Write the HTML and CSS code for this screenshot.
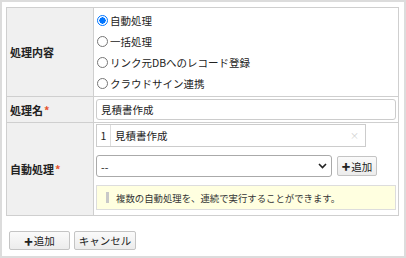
FILE: index.html
```html
<!DOCTYPE html>
<html lang="ja">
<head>
    <meta charset="UTF-8">
    <title>処理設定</title>
    <link rel="stylesheet" href="styles.css">
</head>
<body>
    <div class="frame">
        <table class="form-table">
            <tr class="row-type">
                <th>処理内容</th>
                <td>
                    <label class="radio"><input type="radio" name="type" checked> 自動処理</label>
                    <label class="radio"><input type="radio" name="type"> 一括処理</label>
                    <label class="radio"><input type="radio" name="type"> リンク元DBへのレコード登録</label>
                    <label class="radio"><input type="radio" name="type"> クラウドサイン連携</label>
                </td>
            </tr>
            <tr class="row-name">
                <th>処理名<span class="req">*</span></th>
                <td><div class="text-input">見積書作成</div></td>
            </tr>
            <tr class="row-auto">
                <th>自動処理<span class="req">*</span></th>
                <td>
                    <div class="list-box">
                        <span class="list-num">1</span>
                        <span class="list-text">見積書作成</span>
                        <span class="list-del">×</span>
                    </div>
                    <div class="select-row">
                        <div class="select-box">
                            <span>--</span>
                            <svg class="chevron" width="9" height="6" viewBox="0 0 9 6"><path d="M1 1 L4.5 4.5 L8 1" fill="none" stroke="#222" stroke-width="1.6"/></svg>
                        </div>
                        <button class="btn btn-small"><b class="plus">+</b>追加</button>
                    </div>
                    <div class="note"><span class="note-bar"></span>複数の自動処理を、連続で実行することができます。</div>
                </td>
            </tr>
        </table>
        <div class="actions">
            <button class="btn btn-add"><b class="plus">+</b>追加</button>
            <button class="btn btn-cancel">キャンセル</button>
        </div>
    </div>
</body>
</html>
```

FILE: styles.css
```css
html, body {
    margin: 0;
    background: #fff;
}
body {
    font-family: "Noto Sans CJK JP", "Noto Sans", sans-serif;
    font-size: 10.5px;
    color: #333;
}
.frame {
    width: 406px;
    height: 258px;
    box-sizing: border-box;
    border: 2px solid #dcdcdc;
    padding: 5px 5px 0 4px;
}
.form-table {
    width: 393px;
    border-collapse: collapse;
    border: 1px solid #c8c8c8;
}
.form-table th,
.form-table td {
    border: 1px solid #cfcfcf;
}
.form-table th {
    width: 80px;
    background: #f0f0f0;
    text-align: left;
    font-size: 11px;
    font-weight: bold;
    color: #222;
    padding: 0 3px;
}
.form-table td {
    padding: 2px;
    vertical-align: top;
}
.req {
    color: #e5532d;
    margin-left: 1px;
}
.row-type td {
    height: 84px;
}
.radio {
    display: flex;
    align-items: center;
    height: 21px;
    color: #222;
}
.radio input {
    appearance: none;
    width: 11px;
    height: 11px;
    margin: 0 2px 0 1px;
    border: 1px solid #767676;
    border-radius: 50%;
    box-sizing: border-box;
}
.radio input:checked {
    border: 1.5px solid #0075ff;
    background: radial-gradient(circle, #0075ff 0 3px, #fff 3.3px);
}
.row-name td {
    height: 21px;
}
.text-input {
    height: 21px;
    box-sizing: border-box;
    border: 1px solid #ccc;
    border-radius: 3px;
    padding: 0 4px;
    line-height: 19px;
    color: #222;
}
.row-auto td {
    padding: 1px 2px 5px 2px;
}
.list-box {
    width: 270px;
    height: 23px;
    box-sizing: border-box;
    border: 1px solid #ccc;
    display: flex;
    align-items: center;
    color: #222;
}
.list-num {
    width: 13px;
    height: 100%;
    border-right: 1px solid #ddd;
    text-align: center;
    line-height: 21px;
}
.list-text {
    flex: 1;
    padding-left: 4px;
}
.list-del {
    color: #cfcfcf;
    font-size: 9px;
    padding-right: 6px;
}
.select-row {
    display: flex;
    align-items: center;
    gap: 5px;
    margin-top: 8px;
}
.select-box {
    width: 236px;
    height: 22px;
    box-sizing: border-box;
    border: 1px solid #aaa;
    border-radius: 3px;
    display: flex;
    align-items: center;
    justify-content: space-between;
    padding: 0 4px;
    color: #222;
}
.btn {
    font-family: "Noto Sans CJK JP", "Noto Sans", sans-serif;
    font-size: 10.5px;
    color: #222;
    border: 1px solid #c4c4c4;
    border-radius: 2px;
    background: linear-gradient(#fafafa, #ececec);
    padding: 0;
    cursor: pointer;
    display: inline-flex;
    align-items: center;
    justify-content: center;
}
.plus {
    font-size: 14px;
    font-weight: 900;
    line-height: 1;
    margin-right: 1px;
}
.btn-small {
    width: 40px;
    height: 20px;
}
.note {
    margin-top: 8px;
    height: 25px;
    box-sizing: border-box;
    border: 1px solid #ddd;
    background: #ffffe0;
    display: flex;
    align-items: center;
    padding-left: 9px;
    font-size: 9.4px;
    color: #333;
}
.note-bar {
    width: 3px;
    height: 11px;
    background: #c8c8c8;
    margin-right: 7px;
}
.actions {
    display: flex;
    gap: 4px;
    margin-top: 15px;
    padding-left: 3px;
}
.btn-add {
    width: 61px;
    height: 19px;
}
.btn-cancel {
    width: 62px;
    height: 19px;
}
```
